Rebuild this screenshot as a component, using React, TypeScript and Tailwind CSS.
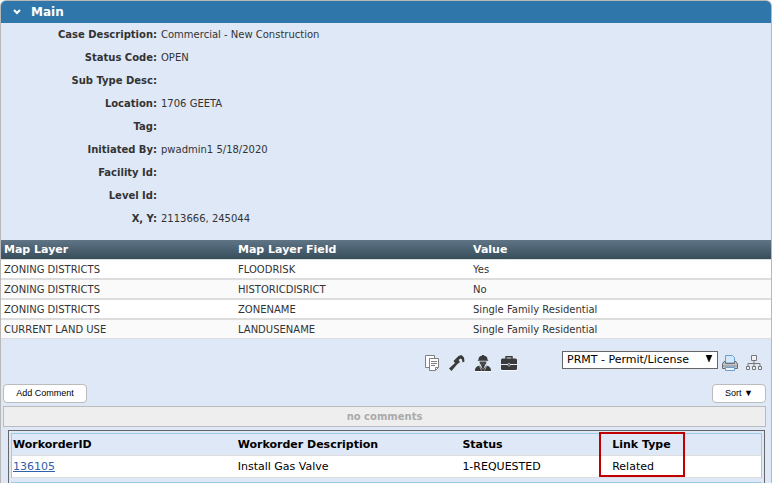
import type { ReactNode } from "react"

const details = [
  ["Case Description:", "Commercial - New Construction"],
  ["Status Code:", "OPEN"],
  ["Sub Type Desc:", ""],
  ["Location:", "1706 GEETA"],
  ["Tag:", ""],
  ["Initiated By:", "pwadmin1 5/18/2020"],
  ["Facility Id:", ""],
  ["Level Id:", ""],
  ["X, Y:", "2113666, 245044"],
]

const layers = [
  ["ZONING DISTRICTS", "FLOODRISK", "Yes"],
  ["ZONING DISTRICTS", "HISTORICDISRICT", "No"],
  ["ZONING DISTRICTS", "ZONENAME", "Single Family Residential"],
  ["CURRENT LAND USE", "LANDUSENAME", "Single Family Residential"],
]

function IconButton({ label, children }: { label: string; children: ReactNode }) {
  return (
    <button type="button" aria-label={label} title={label} className="size-4">
      <svg viewBox="0 0 16 16" className="size-4 overflow-visible">{children}</svg>
    </button>
  )
}

function Toolbar() {
  return (
    <div className="mt-3 flex h-5 items-start justify-end pr-[9px]">
      <div className="mt-1 flex gap-[10px]">
        <IconButton label="Copy">
          <path d="M2.500.5h9v12h-9z" fill="#fff" stroke="#808080" />
          <path d="M6.500 3.500h9v9l-3 3h-6z" fill="#fff" stroke="#808080" />
          <path d="M8 6.500h6M8 8.500h6M8 10.500h4M12.500 15v-2.500H15" fill="none" stroke="#808080" />
        </IconButton>
        {/* pipe wrench */}
        <IconButton label="Work order">
          <path d="M0 13.500 6 8 4.500 6 9.500 1 12.500 0 15 2.500 15.500 6.500 13.500 7.500 13 4.500 11.500 3.500 9.500 5 11 7 8 9.500 2.500 16z" fill="#3a3a3a" />
        </IconButton>
        {/* worker in a hard hat */}
        <IconButton label="Inspection">
          <path d="M0 16.500h16" stroke="#fff" opacity=".7" />
          <path d="M3.500 4.500C3.500 2 5 1 7 .800V0h2v.800c2 .2 3.500 1.200 3.500 3.700l1 1.200h-11z" fill="#3a3a3a" />
          <path d="M4.500 6.500h7C11.500 9 10 10.500 8 10.500S4.500 9 4.500 6.500z" fill="#4a4a4a" />
          <path d="M0 16c0-3 1-4.500 4.500-5.500L8 14.500l3.500-4C15 11.500 16 13 16 16z" fill="#3a3a3a" />
          <path d="M6 10h4l-2 5z" fill="#3a3a3a" />
          <path d="m4.500 11 2 4.500M11.500 11l-2 4.500" fill="none" stroke="#dfe8f6" strokeWidth=".6" />
        </IconButton>
        <IconButton label="Case">
          <path d="M0 15.500h16" stroke="#fff" opacity=".7" />
          <path d="M5 4V1.700h6V4" fill="none" stroke="#3a3a3a" strokeWidth="1.4" />
          <rect y="3.500" width="16" height="11.500" rx="1.500" fill="#3a3a3a" />
          <path d="M0 9.500h16" fill="none" stroke="#dfe8f6" />
          <path d="M7 8.500h2v2.500H7z" fill="#3a3a3a" stroke="#dfe8f6" strokeWidth=".5" />
        </IconButton>
      </div>
      <div className="relative ml-[45px]">
        <select
          aria-label="Case type"
          className="block h-[18px] w-[156px] appearance-none border border-[#666] bg-white pl-1 text-[11px] leading-4 text-black"
        >
          <option>PRMT - Permit/License</option>
        </select>
        <svg viewBox="0 0 8 7" className="pointer-events-none absolute right-[5px] top-1 h-[7px] w-2">
          <path d="M1 0h6L4 7z" fill="#000" stroke="#000" strokeWidth=".5" />
        </svg>
      </div>
      <div className="ml-1 mt-1 flex gap-2">
        <IconButton label="Print">
          <path d="M3.500 8V.5h7l2 2V8z" fill="#d3e8fb" stroke="#6a9fd0" />
          <path d="M2 6.500h1.500v2h9v-2H14l1.500 2.500v4.500H.5V9z" fill="#c4c7cb" stroke="#686c72" />
          <path d="M1 11h14" stroke="#888c92" />
          <path d="M3.500 12.500h9v3h-9z" fill="#eaf5ff" stroke="#6a9fd0" />
        </IconButton>
        <IconButton label="Hierarchy">
          <path d="M5.500.5h5v5h-5zM.5 11.500h3v3h-3zM6.500 11.500h3v3h-3zM12.500 11.500h3v3h-3z" fill="#f2f2f2" stroke="#777" />
          <path d="M8 6v5M2 11V8.500h12V11" fill="none" stroke="#777" />
        </IconButton>
      </div>
    </div>
  )
}

function Workorders() {
  return (
    <div className="ml-[7px] mr-[6px] mt-[3px] border border-b-0 border-[#666] px-[2px] pt-[2px]">
      <table className="w-full table-fixed border-separate border-spacing-0 border border-b-0 border-[#9ccbe8] text-left text-[11px] leading-4 text-black">
        <colgroup>
          <col className="w-[30%]" />
          <col className="w-[30%]" />
          <col className="w-[20%]" />
          <col className="w-[20%]" />
        </colgroup>
        <thead>
          <tr className="h-[22px] *:border-b *:border-[#ddd] *:pl-px">
            <th>WorkorderID</th>
            <th>Workorder Description</th>
            <th>Status</th>
            <th>Link Type</th>
          </tr>
        </thead>
        <tbody>
          <tr className="h-[22px] bg-white *:border-b *:border-[#ddd] *:pl-px">
            <td><a href="#136105" className="text-[#315fa8] underline">136105</a></td>
            <td>Install Gas Valve</td>
            <td>1-REQUESTED</td>
            <td className="relative">
              Related
              <span className="pointer-events-none absolute -left-3 -top-6 h-[45px] w-[86px] border-2 border-[#c00000]" />
            </td>
          </tr>
        </tbody>
      </table>
      <div className="mt-1 h-px bg-[#9ccbe8]" />
    </div>
  )
}

export default function App() {
  return (
    <main className="overflow-hidden rounded-t-md border border-b-0 border-[#b8b8b8] bg-[#dfe8f6] font-['DejaVu_Sans',Verdana,sans-serif] text-[10px] text-[#333]">
      <h1 className="flex h-[22px] items-center bg-[#2f77ab] pl-3 text-[12px] font-bold text-white">
        <button type="button" aria-label="Collapse" className="mr-[10px]">
          <svg viewBox="0 0 8 6" className="h-[6px] w-2">
            <path d="m1 1 3 3 3-3" fill="none" stroke="#fff" strokeWidth="2" />
          </svg>
        </button>
        Main
      </h1>
      <dl>
        {details.map(([label, value]) => (
          <div key={label} className="flex h-[23px] items-center gap-1">
            <dt className="w-[156px] shrink-0 text-right font-bold">{label}</dt>
            <dd>{value}</dd>
          </div>
        ))}
      </dl>

      <table className="mt-[10px] w-full table-fixed border-separate border-spacing-0 text-left leading-4">
        <colgroup>
          <col className="w-[234px]" />
          <col className="w-[235px]" />
          <col />
        </colgroup>
        <thead>
          <tr className="h-5 bg-linear-to-b from-[#5f7485] to-[#374c59] text-[11px] text-white *:border-b *:border-[#ddd] *:pl-[3px]">
            <th>Map Layer</th>
            <th>Map Layer Field</th>
            <th>Value</th>
          </tr>
        </thead>
        <tbody>
          {layers.map(([layer, field, value]) => (
            <tr
              key={field}
              className="h-5 bg-white *:border-b-2 *:border-[#ddd] *:pl-[3px] *:pt-[2px] last:h-[19px] last:*:border-b even:bg-[#fafafa]"
            >
              <td>{layer}</td>
              <td>{field}</td>
              <td>{value}</td>
            </tr>
          ))}
        </tbody>
      </table>

      <Toolbar />

      <div className="mt-[13px] flex justify-between pl-[2px] pr-[5px] font-['Liberation_Sans',Arial,sans-serif] text-[9px] text-black">
        <button type="button" className="h-[19px] w-[84px] rounded border border-[#bbb] bg-white">Add Comment</button>
        <button type="button" className="h-[19px] w-[54px] rounded border border-[#bbb] bg-white">Sort ▼</button>
      </div>
      <p className="ml-[2px] mr-[5px] mt-[3px] flex h-[21px] items-center justify-center border border-[#bbb] bg-[#eee] font-bold text-[#aaa]">
        no comments
      </p>
      <Workorders />
    </main>
  )
}
